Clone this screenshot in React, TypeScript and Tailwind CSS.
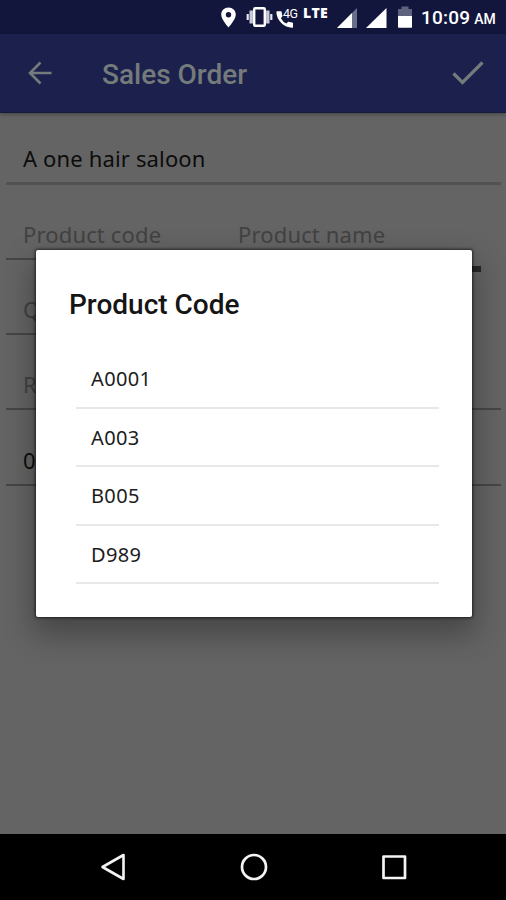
import type { ReactNode } from "react";

const productCodes = ["A0001", "A003", "B005", "D989"];

function StatusBar() {
    return (
        <div className="flex h-[34px] shrink-0 items-start bg-[#12163d] pl-[220px] text-white">
            <svg className="mt-[7px] h-[21px] w-[17px]" viewBox="0 0 17 21" fill="#fff">
                <path fillRule="evenodd" d="M8.5 0.5C4.4 0.5 1.2 3.6 1.2 7.6 1.2 12.6 8.5 20.5 8.5 20.5S15.8 12.6 15.8 7.6C15.8 3.6 12.6 0.5 8.5 0.5ZM8.5 5a2.7 2.7 0 1 1 0 5.4 2.7 2.7 0 0 1 0-5.4Z" />
            </svg>
            <svg className="ml-[9px] mt-[6px] h-[22px] w-[27px]" viewBox="0 0 27 22" fill="none">
                <path d="M5.2 4.5v13M21.8 4.5v13" stroke="#c9cbdb" strokeWidth="3.4" />
                <path d="M1.7 8v6M25.3 8v6" stroke="#e4e5ee" strokeWidth="2.2" />
                <rect x="8.2" y="2.2" width="10.6" height="17.6" rx="1" stroke="#fff" strokeWidth="2.4" />
            </svg>
            <div className="relative ml-[2px] mt-[6px] h-[24px] w-[25px]">
                <svg className="h-[24px] w-[24px]" viewBox="0 0 24 24" fill="#fff">
                    <path d="M2.3 5.2h3.6q.7 0 .8.7.1 2 .7 3.7.2.6-.2 1L5.9 12.2q2.2 3.9 5.400 5.300l1.600-1.500q.5-.4 1-.2 1.800.6 3.300.7.8.1.8.8v3.600q0 .9-.9.9C9.200 21.800 1.400 14.300 1.400 6.100q0-.9.9-.9Z" />
                </svg>
                <span className="absolute left-[8px] top-[1px] font-['Roboto'] text-[12.5px] leading-[13px] tracking-[-0.5px]">4G</span>
            </div>
            <span className="ml-[3px] mt-[6px] w-[28px] font-['Open_Sans'] text-[14px] leading-[14px] font-extrabold tracking-[0.3px]">LTE</span>
            <svg className="ml-[6px] mt-[8px] h-[20px] w-[20px]" viewBox="0 0 20 20">
                <path d="M0 20 20 0v20Z" fill="#6b6e8b" />
                <path d="M0 20 15 5v15Z" fill="#fff" />
            </svg>
            <svg className="ml-[9px] mt-[8px] h-[20px] w-[21px]" viewBox="0 0 21 20">
                <path d="M0 20 20.5 0v20Z" fill="#fff" />
            </svg>
            <svg className="ml-[11px] mt-[6px] h-[22px] w-[14px]" viewBox="0 0 14 22">
                <path d="M0 3h3.5V.5h7V3H14v7H0Z" fill="#5f627f" />
                <path d="M0 10h14v11q0 .7-.7.7H.7Q0 21.7 0 21Z" fill="#fff" />
            </svg>
            <div className="ml-[9px] mt-[6px] flex items-baseline whitespace-nowrap font-['Roboto'] font-medium leading-[24px]">
                <span className="text-[19px] tracking-[0.2px]">10:09</span>
                <span className="ml-[4px] text-[14px]">AM</span>
            </div>
        </div>
    );
}

function Toolbar() {
    return (
        <header className="flex h-[79px] shrink-0 items-center border-b border-[#151b3c] bg-[#1b214c] text-[#757b7b] shadow-[0_1px_4px_rgba(0,0,0,0.35)]">
            <svg className="ml-[28px] h-[24px] w-[24px]" viewBox="0 0 24 24" fill="none" stroke="currentColor" strokeWidth="2.6">
                <path d="M23.5 12H3M12.5 1.5 2 12l10.500 10.500" />
            </svg>
            <h1 className="ml-[50px] mt-[4px] flex-1 font-['Roboto'] text-[28px] leading-[34px] font-medium">Sales Order</h1>
            <svg className="mr-[22px] h-[24px] w-[32px]" viewBox="0 0 32 24" fill="none" stroke="currentColor" strokeWidth="3.2">
                <path d="M1.5 12.500 10.500 21.500 30.500 1.500" />
            </svg>
        </header>
    );
}

function Field({ children }: { children?: ReactNode }) {
    return (
        <div className="flex h-[75.3px] items-end border-b-2 border-[#464646] pb-[9px] pl-[17px] text-[#424242]">
            {children}
        </div>
    );
}

function ProductCodeDialog() {
    return (
        <div className="absolute left-[36px] top-[250px] h-[367px] w-[435.5px] rounded-[2px] bg-white pl-[40px] pr-[33px] pt-[37px] shadow-[0_0_3px_1px_rgba(0,0,0,0.6),0_14px_30px_4px_rgba(0,0,0,0.3)]">
            <h2 className="-ml-[7px] font-['Roboto'] text-[28px] leading-[36px] font-medium text-[#151515]">Product Code</h2>
            <ul className="mt-[27px]">
                {productCodes.map((code) => (
                    <li key={code} className="flex h-[58.5px] items-center border-b-2 border-[#e8e8e8] pl-[15px] pt-[2px] text-[20px] tracking-[0.35px] text-[#1c1c1c]">
                        {code}
                    </li>
                ))}
            </ul>
        </div>
    );
}

function NavigationBar() {
    return (
        <nav className="flex h-[66px] shrink-0 items-center bg-black pl-[100px]">
            <svg className="h-[30px] w-[28px]" viewBox="0 0 28 30" fill="none" stroke="#f4f4f4" strokeWidth="2.6" strokeLinejoin="round">
                <path d="M23.5 3v24L2.500 15Z" />
            </svg>
            <svg className="ml-[110.5px] h-[30px] w-[30px]" viewBox="0 0 30 30" fill="none" stroke="#f4f4f4" strokeWidth="2.7">
                <circle cx="15" cy="15" r="12" />
            </svg>
            <svg className="ml-[111.5px] h-[28px] w-[28px]" viewBox="0 0 28 28" fill="none" stroke="#f4f4f4" strokeWidth="2.7" strokeLinejoin="round">
                <rect x="3.5" y="3.5" width="21.5" height="21.5" />
            </svg>
        </nav>
    );
}

export default function App() {
    return (
        <div className="relative flex h-[900px] w-[506px] flex-col overflow-hidden bg-[#646464] font-['Noto_Sans',sans-serif]">
            <StatusBar />
            <Toolbar />
            <main className="flex-1 pl-[6px] pr-[5px] text-[22px] leading-[30px] tracking-[0.15px]">
                <div className="flex h-[71.5px] items-end border-b-[3px] border-[#525252] pb-[9px] pl-[17px] text-[#0c0c0c]">
                    A one hair saloon
                </div>
                <div className="flex">
                    <div className="w-[215px]">
                        <Field>Product code</Field>
                        <Field>Q</Field>
                    </div>
                    <div className="relative flex-1">
                        <div className="flex h-[75.3px] items-end pb-[11px] pl-[17px] text-[#424242]">Product name</div>
                        <div className="absolute right-[20px] top-[81.5px] h-[6px] w-[30px] bg-[#272727]" />
                    </div>
                </div>
                <Field>R</Field>
                <Field>
                    <span className="text-[#0c0c0c]">0</span>
                </Field>
            </main>
            <NavigationBar />
            <ProductCodeDialog />
        </div>
    );
}
